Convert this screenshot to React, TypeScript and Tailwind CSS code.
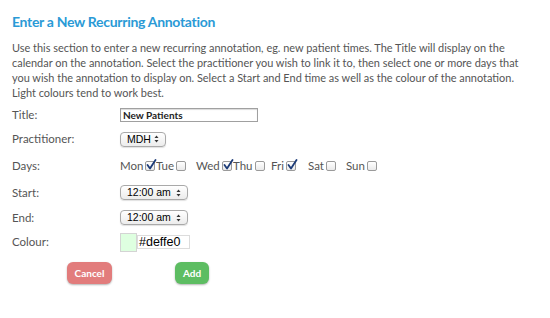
const font = { fontFamily: "Lato, 'Open Sans', sans-serif" };

function Arrows() {
  return (
    <svg width="5" height="8" viewBox="0 0 5 8" className="shrink-0">
      <path d="M2.5 0.5 L4.5 3 L0.5 3 Z" fill="#333" />
      <path d="M2.5 7.5 L4.5 5 L0.5 5 Z" fill="#333" />
    </svg>
  );
}

function MacSelect({ value, width }: { value: string; width: string }) {
  return (
    <div
      className={`flex h-[15px] items-center justify-between rounded-[4px] border border-[#a9a9a9] bg-gradient-to-b from-white to-[#ececec] pl-[6px] pr-[6px] shadow-[0_1px_1px_rgba(0,0,0,0.12)] ${width}`}
      style={{ fontFamily: "'Liberation Sans', Arial, sans-serif" }}
    >
      <span className="text-[10.5px] leading-none text-black">{value}</span>
      <Arrows />
    </div>
  );
}

function Check({ checked }: { checked: boolean }) {
  return (
    <span className="relative ml-[2px] inline-block h-[10px] w-[10px] rounded-[2px] border border-[#9a9a9a] bg-gradient-to-b from-white to-[#eaeaea]">
      {checked && (
        <svg width="11" height="11" viewBox="0 0 11 11" className="absolute left-[0px] top-[-3px]">
          <path d="M1.5 6 L4 9.5 L9.5 1" fill="none" stroke="#1d3c78" strokeWidth="1.8" strokeLinecap="round" strokeLinejoin="round" />
        </svg>
      )}
    </span>
  );
}

const days: { d: string; c: boolean; w: string }[] = [
  { d: "Mon", c: true, w: "w-[36px]" },
  { d: "Tue", c: false, w: "w-[40px]" },
  { d: "Wed", c: true, w: "w-[37px]" },
  { d: "Thu", c: false, w: "w-[38px]" },
  { d: "Fri", c: true, w: "w-[37px]" },
  { d: "Sat", c: false, w: "w-[38px]" },
  { d: "Sun", c: false, w: "w-[38px]" },
];

function Row({ label, h, children }: { label: string; h: string; children: React.ReactNode }) {
  return (
    <div className={`flex items-center ${h}`}>
      <div className="w-[108px] text-[11.5px] text-[#555]">{label}</div>
      <div className="flex items-center">{children}</div>
    </div>
  );
}

export default function App() {
  return (
    <div className="h-[318px] w-[550px] bg-white px-[12px] pt-[13px]" style={font}>
      <h1 className="text-[14px] font-bold leading-[18px] tracking-[-0.3px] text-[#2a9ad6]">Enter a New Recurring Annotation</h1>
      <p className="mt-[9px] w-[520px] text-[10.95px] leading-[15px] text-[#555]">
        Use this section to enter a new recurring annotation, eg. new patient times. The Title will display on the calendar on the annotation. Select the practitioner you wish to link it to, then select one or more days that you wish the annotation to display on. Select a Start and End time as well as the colour of the annotation. Light colours tend to work best.
      </p>
      <div className="mt-[4px]">
        <Row label="Title:" h="h-[22px]">
          <div className="flex h-[14px] w-[138px] items-center border border-[#a0a0a0] bg-white pl-[2px] shadow-[inset_0_1px_1px_rgba(0,0,0,0.15)]">
            <span className="text-[10px] font-bold leading-none text-[#222]">New Patients</span>
          </div>
        </Row>
        <Row label="Practitioner:" h="h-[26px]">
          <MacSelect value="MDH" width="w-[46px]" />
        </Row>
        <Row label="Days:" h="h-[28px]">
          {days.map((x) => (
            <span key={x.d} className={`flex items-center text-[11.5px] text-[#555] ${x.w}`}>
              {x.d}
              <Check checked={x.c} />
            </span>
          ))}
        </Row>
        <Row label="Start:" h="h-[25px]">
          <MacSelect value="12:00 am" width="w-[68px]" />
        </Row>
        <Row label="End:" h="h-[25px]">
          <MacSelect value="12:00 am" width="w-[68px]" />
        </Row>
        <Row label="Colour:" h="h-[24px]">
          <div className="h-[19px] w-[17px] border border-[#d4d4d4] bg-[#deffe0]" />
          <div
            className="flex h-[14px] w-[53px] items-center border border-[#dcdcdc] bg-white pl-[1px]"
            style={{ fontFamily: "'Liberation Sans', Arial, sans-serif" }}
          >
            <span className="text-[12.5px] leading-none text-black">#deffe0</span>
          </div>
        </Row>
      </div>
      <div className="ml-[55px] mt-[8px] flex gap-[63px]">
        <button className="h-[22px] w-[45px] rounded-[6px] bg-[#e27c7c] text-[10px] font-bold text-white shadow-[0_1px_2px_rgba(0,0,0,0.3)]">
          Cancel
        </button>
        <button className="h-[22px] w-[34px] rounded-[6px] bg-[#5dbd62] text-[10px] font-bold text-white shadow-[0_1px_2px_rgba(0,0,0,0.3)]">
          Add
        </button>
      </div>
    </div>
  );
}
